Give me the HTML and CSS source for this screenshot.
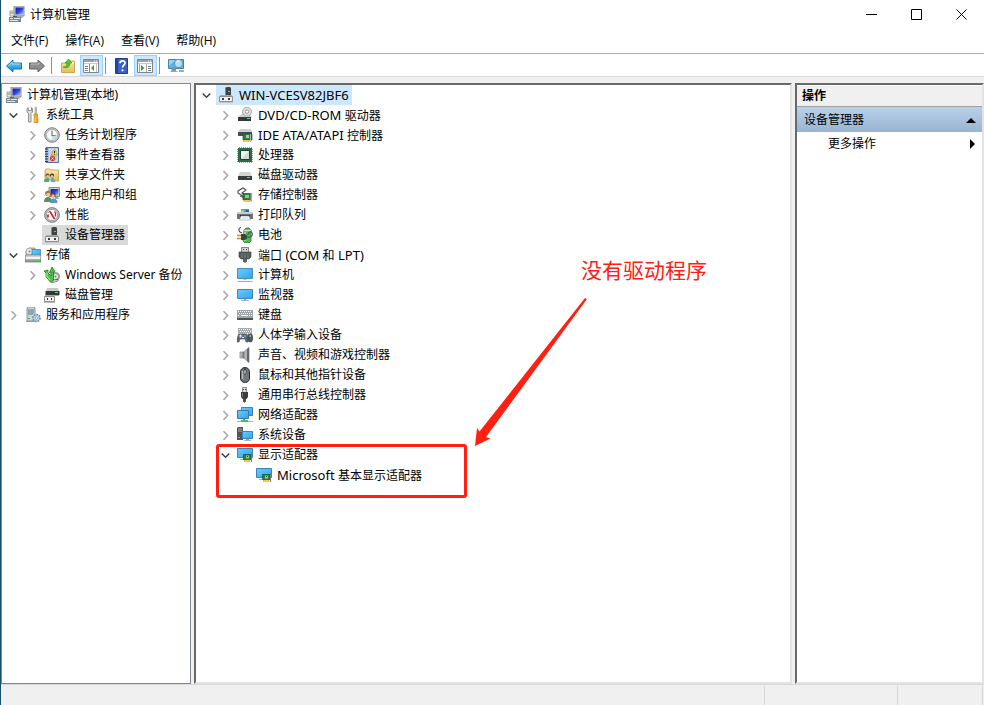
FILE: index.html
```html
<!DOCTYPE html>
<html lang="zh-CN">
<head>
  <meta charset="UTF-8">
  <meta name="viewport" content="width=device-width, initial-scale=1.0">
  <title>计算机管理</title>
  <link rel="stylesheet" href="styles.css">
</head>
<body>

  <!-- Icon sprite -->
  <svg class="sprite" aria-hidden="true">
    <defs>
      <linearGradient id="g-screen" x1="0" y1="0" x2="1" y2="1">
        <stop offset="0" stop-color="#6ccbff"/><stop offset="1" stop-color="#2fa5ee"/>
      </linearGradient>
      <linearGradient id="g-navy" x1="0" y1="0" x2="1" y2="1">
        <stop offset="0" stop-color="#0a1cb4"/><stop offset="0.5" stop-color="#2742dc"/><stop offset="1" stop-color="#b6ccff"/>
      </linearGradient>
      <linearGradient id="g-metal" x1="0" y1="0" x2="0" y2="1">
        <stop offset="0" stop-color="#e4e4e4"/><stop offset="1" stop-color="#8c8c8c"/>
      </linearGradient>
      <linearGradient id="g-back" x1="0" y1="0" x2="0" y2="1">
        <stop offset="0" stop-color="#7fd4f5"/><stop offset="1" stop-color="#0b86cf"/>
      </linearGradient>
      <linearGradient id="g-folder" x1="0" y1="0" x2="0" y2="1">
        <stop offset="0" stop-color="#fbe9a2"/><stop offset="1" stop-color="#e5bd55"/>
      </linearGradient>
    </defs>

    <symbol id="i-manage" viewBox="0 0 16 16">
      <path d="M5 0h10v10H5z" fill="#cfccc0" stroke="#8f8f8a"/>
      <path d="M6.500 1.500h8v7h-8z" fill="url(#g-navy)"/>
      <path d="M1 5h4v5H1z" fill="#ebeae2" stroke="#a0a09a"/>
      <path d="M1.500 7h3" stroke="#4a9a50"/>
      <path d="M7 10h6l1 2H6z" fill="#a9a9a4"/>
      <path d="M0 11h12v5H0z" fill="#7b8794"/>
      <path d="M1 12h3v1H1zM5 12h6v1H5zM1 14h8v1H1z" fill="#dfe5ea"/>
      <path d="M4 10h4v1H4z" fill="#4d5965"/>
    </symbol>
    <symbol id="i-tools" viewBox="0 0 16 16">
      <path d="M3 .5L2 2v3l1.500 1.500V15h2.500V6.500L7.500 5V2L6.500.5v3h-3z" fill="#dcdcdc" stroke="#777" stroke-width=".8"/>
      <path d="M10 .5h1.500v7H10z" fill="#b7bcc0" stroke="#888" stroke-width=".5"/>
      <path d="M9 7h3.500v2L12 10l1 1.500v4H9v-4L9.700 10 9 9z" fill="#f5ae22" stroke="#c07c0b" stroke-width=".7"/>
      <path d="M10 11.500v3.500" stroke="#ffe08a"/>
    </symbol>
    <symbol id="i-clock" viewBox="0 0 16 16">
      <circle cx="8" cy="8" r="7.300" fill="#c9c9c9" stroke="#7e7e7e"/>
      <circle cx="8" cy="8" r="5.600" fill="#f3f8fd" stroke="#9a9a9a" stroke-width=".6"/>
      <path d="M8 8h5A5 5 0 0 1 8 13z" fill="#c4ddf2"/>
      <path d="M8 3.500V8.500h3.500" fill="none" stroke="#a07b34" stroke-width="1.200"/>
    </symbol>
    <symbol id="i-event" viewBox="0 0 16 16">
      <path d="M2 .5h12.500v15H2z" fill="#a9bfe6" stroke="#4f6da8"/>
      <path d="M5 1.500h9v13H5z" fill="#d3dff3"/>
      <path d="M6 4h7M6 6h7M6 8h7M6 10h7M6 12h7" stroke="#8ea9d6" stroke-width=".7"/>
      <path d="M1 2h3M1 4.500h3M1 7h3M1 9.500h3M1 12h3M1 14.500h3" stroke="#2b3c66"/>
      <path d="M10.500 2l3.200 6H7.300z" fill="#fbd72b" stroke="#b59413" stroke-width=".6"/>
      <path d="M10.500 4v2M10.500 6.800v.7" stroke="#222"/>
      <circle cx="8.500" cy="11.500" r="2.700" fill="#e2392b"/>
      <path d="M7.500 10.500l2 2M9.500 10.500l-2 2" stroke="#fff" stroke-width=".9"/>
    </symbol>
    <symbol id="i-share" viewBox="0 0 16 16">
      <path d="M1 4l1-2h4l1 1h7.500v11H1z" fill="url(#g-folder)" stroke="#c79b3b" stroke-width=".8"/>
      <path d="M8 5h5" stroke="#fff6cf"/>
      <circle cx="3.500" cy="8.500" r="2" fill="#6b4a32"/><circle cx="3.700" cy="9.300" r="1.300" fill="#f0c9a0"/>
      <circle cx="8" cy="8.500" r="2" fill="#3e2b20"/><circle cx="8" cy="9.300" r="1.300" fill="#f0c9a0"/>
      <path d="M0 15c0-3 2-4 3.500-4S6 12 6 15z" fill="#47a885"/>
      <path d="M5.500 15c0-3 1.500-4 3-4s2.500 1 2.500 4z" fill="#56a9d6"/>
      <path d="M5 15l1-3 1 3z" fill="#fff"/>
    </symbol>
    <symbol id="i-users" viewBox="0 0 16 16">
      <path d="M5 .5h10.500v9H5z" fill="#d6d5cc" stroke="#8d8d8d"/>
      <path d="M6.500 2h8v6.500h-8z" fill="url(#g-navy)"/>
      <path d="M11 10h3l1 2h-4z" fill="#a4a4a0"/>
      <circle cx="4" cy="6.500" r="2.800" fill="#9b7040"/><circle cx="4.300" cy="7.600" r="1.900" fill="#f2c99c"/>
      <circle cx="9" cy="8" r="2.500" fill="#6a3c20"/><circle cx="9" cy="9" r="1.700" fill="#efbf8f"/>
      <path d="M0 15c0-3.500 1.500-5 4-5s4 1.500 4 5z" fill="#5d8f5b"/>
      <path d="M6 16c0-3 1-4.500 3.500-4.500S13.500 13 13.500 16z" fill="#5c94c4"/>
    </symbol>
    <symbol id="i-perf" viewBox="0 0 16 16">
      <circle cx="8" cy="8" r="7.400" fill="#c2c2c2" stroke="#666" stroke-width=".8"/>
      <circle cx="8" cy="8" r="5.600" fill="#fff" stroke="#777" stroke-width=".6"/>
      <path d="M4 10.500V7.500M6 4.500L10.500 12" stroke="#d8202a" stroke-width="1.700" fill="none"/>
      <path d="M10.500 4.500l1 1.500v3.500" stroke="#d8202a" stroke-width="1.300" fill="none"/>
      <path d="M4.500 5.500L6 4" stroke="#444" stroke-width=".8"/>
    </symbol>
    <symbol id="i-device" viewBox="0 0 16 16">
      <path d="M7 1l2-1h3l1 1v7H7z" fill="#3e4346"/>
      <path d="M7 1l1-.5V8H7z" fill="#83898c"/>
      <path d="M10 4h2v1h-2z" fill="#3ff04f"/>
      <path d="M2 8h12v2H2z" fill="#aaa"/>
      <path d="M1.500 9.500h13v5h-13z" fill="#f1f1f1" stroke="#8d8d8d"/>
      <path d="M4 11h2v2H4zM10 11h2v2h-2z" fill="#3b3b3b"/>
      <path d="M1 15h14v1H1z" fill="#c4c4c4"/>
    </symbol>
    <symbol id="i-storage" viewBox="0 0 16 16">
      <path d="M1 4l3-3h6v8H1z" fill="#c6cacc" stroke="#838383" stroke-width=".7"/>
      <circle cx="4.500" cy="4.500" r="3.500" fill="#e8e8e8" stroke="#8c8c8c" stroke-width=".7"/><circle cx="4.500" cy="4.500" r="1" fill="#888"/>
      <path d="M7 2.500h8.500v6H7z" fill="url(#g-screen)" stroke="#37799f" stroke-width=".7"/>
      <path d="M0 9l2-1h13l1 1v6H0z" fill="url(#g-metal)" stroke="#767676" stroke-width=".7"/>
      <path d="M1 10h14v2H1z" fill="#f5f5f5"/>
      <path d="M11 13h3v1h-3z" fill="#39e04b"/>
    </symbol>
    <symbol id="i-backup" viewBox="0 0 16 16">
      <path d="M7 5l7 1 2 3-2 5-6 2z" fill="#c3c3c3" stroke="#7d7d7d" stroke-width=".7"/>
      <circle cx="11.500" cy="9.500" r="3" fill="#eee" stroke="#777" stroke-width=".8"/><circle cx="11.500" cy="9.500" r="1" fill="#777"/>
      <path d="M11 12h3v1h-3z" fill="#d23c2c"/>
      <path d="M0 4l4-1v3l3 3V5l-1.500.5L8 0l3 4.500L9.500 5v8L7 15.500 2 10V6z" fill="#46c63f" stroke="#1b7d20" stroke-width=".8"/>
      <path d="M3 5.500v4l3 3.500" stroke="#b5f4a0" fill="none"/>
    </symbol>
    <symbol id="i-diskmgr" viewBox="0 0 16 16">
      <path d="M3 1h11l1 3H2z" fill="#c9c9c9"/>
      <path d="M1.500 4h14v4h-14z" fill="#34383b"/>
      <path d="M11 5h3v1h-3z" fill="#3cf04d"/>
      <path d="M1 8h14v1H1z" fill="#aaa"/>
      <path d="M.5 9.500h10v5H.5z" fill="#f1f1f1" stroke="#8d8d8d"/>
      <path d="M3 11h1v2H3zM7 11h1v2H7z" fill="#333"/>
      <path d="M0 15h11v1H0z" fill="#bbb"/>
    </symbol>
    <symbol id="i-service" viewBox="0 0 16 16">
      <path d="M2 1l1-1h6l1 1v13H2z" fill="#cdd6db" stroke="#74828b" stroke-width=".8"/>
      <path d="M3 3h6M3 5h6M3 7h5" stroke="#60717c"/>
      <path d="M3 11h2v1H3z" fill="#35bb45"/>
      <path d="M1 14h8v1H1z" fill="#90a0a8"/>
      <circle cx="11.500" cy="11" r="3.300" fill="#a8c8e3" stroke="#5684ab" stroke-width="2" stroke-dasharray="1.500 1"/>
      <circle cx="11.500" cy="11" r="2.800" fill="#b9d6ed"/><circle cx="11.500" cy="11" r="1.200" fill="#fff" stroke="#5684ab" stroke-width=".6"/>
    </symbol>

    <symbol id="i-dvd" viewBox="0 0 16 16">
      <path d="M3 9l3-3h6l3 4z" fill="#c7c9ca"/>
      <circle cx="10" cy="4.700" r="4.500" fill="#dedede" stroke="#8e8e8e" stroke-width=".7"/>
      <circle cx="10" cy="4.700" r="1.700" fill="#fff" stroke="#888" stroke-width=".8"/>
      <path d="M1 10l2-2h3l2 1.500h5l1 .5z" fill="#d1d1d1"/>
      <path d="M1 10h13v4H1z" fill="#34383b"/>
      <path d="M10 11h3v1h-3z" fill="#35f04a"/>
    </symbol>
    <symbol id="i-ide" viewBox="0 0 16 16">
      <path d="M1 5l2-3h11l1 3z" fill="#cfcfcf"/>
      <path d="M1 5h14v4H1z" fill="#4a4e51"/>
      <path d="M6 7h9v6H6z" fill="#2c7d52" stroke="#16553a" stroke-width=".7"/>
      <path d="M9 8h3v3H9z" fill="#9fd38f"/>
      <path d="M13 7h1v8h-1z" fill="#b3b3b3"/>
      <path d="M6 13h6v2H6z" fill="#f2b51d"/>
      <path d="M8 13v2M10 13v2" stroke="#fff3c0" stroke-width=".6"/>
    </symbol>
    <symbol id="i-cpu" viewBox="0 0 16 16">
      <path d="M.5 2v13M15.500 2v13M2 .5h13M2 15.500h13" stroke="#b79b3a" stroke-dasharray="1 1"/>
      <path d="M1 1h14v14H1z" fill="#2d6b4b"/>
      <path d="M3.500 3.500h9v9h-9z" fill="#d3d9d6" stroke="#144a33"/>
      <path d="M4 4h8L4 12z" fill="#f2f4f3"/>
    </symbol>
    <symbol id="i-disk" viewBox="0 0 16 16">
      <path d="M1 9l2-4h10l2 4z" fill="#d3d4d4"/>
      <path d="M1 9h14v4H1z" fill="#393e41"/>
      <path d="M10 10h3v1h-3z" fill="#38f04d"/>
    </symbol>
    <symbol id="i-controller" viewBox="0 0 16 16">
      <path d="M1 4l5-3 3 2-4 3 4 3-2 1-6-4z" fill="#fff" stroke="#4b4b4b" stroke-width="1.100"/>
      <path d="M3 9l4 2" stroke="#4b4b4b"/>
      <path d="M6 6.500h8V13H6z" fill="#2c7d52" stroke="#16553a" stroke-width=".7"/>
      <path d="M8 8h4v3H8z" fill="#8fca84"/>
      <path d="M13.500 6h1.500v8.500h-1.500z" fill="#a5a5a5"/>
      <path d="M7 13h6v2H7z" fill="#f2b51d"/>
      <path d="M9 13v2M11 13v2" stroke="#fff3c0" stroke-width=".6"/>
    </symbol>
    <symbol id="i-printer" viewBox="0 0 16 16">
      <path d="M4 2h8v3H4z" fill="#27a8ec"/><path d="M4 3h3v2H4z" fill="#8adf57"/><path d="M9 3h3v2H9z" fill="#245fc6"/>
      <path d="M1 5h14l1 2v5H0V7z" fill="#6d7275"/>
      <path d="M1 5h14l1 2H0z" fill="#c9cccd"/>
      <path d="M3 8h10v2H3z" fill="#2d3133"/>
      <path d="M4 9h8l1.500 4h-11z" fill="#fff" stroke="#999" stroke-width=".6"/>
      <path d="M5 11h6" stroke="#a9dcf5"/>
    </symbol>
    <symbol id="i-battery" viewBox="0 0 16 16">
      <path d="M7 3l2-2h3l2 2v11l-2 2H8l-2-2z" fill="#45bd4d" stroke="#2d5e30" stroke-width=".7"/>
      <path d="M7 2.500h7v2H7z" fill="#e3e9e3" stroke="#777" stroke-width=".5"/>
      <path d="M8 5v9" stroke="#b7f4a0" stroke-width="1.300"/>
      <path d="M9 9.500c5 2 7-1 6-3.500S11 5 11 8M5 6C1 5 1 1 4 .5" fill="none" stroke="#4a4f52" stroke-width="1.100"/>
      <path d="M4 7h4l2 1.500v3L8 13H4z" fill="#3c4144"/>
      <path d="M0 8.500h4M0 11.500h4" stroke="#c08f28" stroke-width="1.300"/>
    </symbol>
    <symbol id="i-port" viewBox="0 0 16 16">
      <path d="M4.500.5h7v5h-7z" fill="#d2d2d2" stroke="#707070" stroke-width=".8"/>
      <path d="M6 2h1v1H6zM9 2h1v1H9z" fill="#444"/>
      <path d="M2 5h12v5l-2 2H4l-2-2z" fill="#55595b" stroke="#3d4042" stroke-width=".6"/>
      <path d="M5 6v5M8 6v5M11 6v5" stroke="#85898b" stroke-width=".7"/>
      <path d="M6 12h4v3H6z" fill="#606466"/><path d="M7 15h2v1H7z" fill="#999"/>
    </symbol>
    <symbol id="i-computer" viewBox="0 0 16 16">
      <path d="M.5 1.500h15v10H.5z" fill="url(#g-screen)" stroke="#4a8eb8"/>
      <path d="M6 12h4v1H6z" fill="#b8cad4"/>
      <path d="M1 14h14l1 1H0z" fill="#9eb0ba"/>
    </symbol>
    <symbol id="i-monitor" viewBox="0 0 16 16">
      <path d="M.5 2.500h15v9H.5z" fill="url(#g-screen)" stroke="#4386b2"/>
      <path d="M7 12h2v1H7z" fill="#8ba1ae"/><path d="M4 13h8v1H4z" fill="#9fb2bd"/>
    </symbol>
    <symbol id="i-keyboard" viewBox="0 0 16 16">
      <path d="M0 3h16v8H0z" fill="#9da5ab"/>
      <path d="M0 11h16v2H0z" fill="#4c5357"/>
      <path d="M1 4.500h14M2 6.500h13M1 8.500h2M12 8.500h3" stroke="#fff" stroke-dasharray="1 1"/>
      <path d="M4 8.500h7" stroke="#fff"/>
    </symbol>
    <symbol id="i-hid" viewBox="0 0 16 16">
      <path d="M1 1h14v8H1z" fill="#a5adb2"/>
      <path d="M2 2.500h12M3 4.500h11M2 6.500h12" stroke="#fff" stroke-dasharray="1 1"/>
      <path d="M2 7h7l2 3v5H9l-1-3H3l-1 3H0v-4z" fill="#676c70" stroke="#43484b" stroke-width=".6"/>
      <path d="M2 9h3M3.500 7.500v3" stroke="#eee"/><path d="M7 8h2v2H7z" fill="#42a7ef"/><path d="M5 10h2v1H5z" fill="#fff"/>
      <rect x="11" y="7" width="4.500" height="8" rx="2.200" fill="#515659" stroke="#303436" stroke-width=".6"/>
      <path d="M13.200 8v2" stroke="#ddd"/>
    </symbol>
    <symbol id="i-sound" viewBox="0 0 16 16">
      <path d="M3 5h4v6H3z" fill="#8f9599" stroke="#5a5f62" stroke-width=".6"/>
      <path d="M4 5v6" stroke="#cfd3d5"/>
      <path d="M7 5l5-4.500v15L7 11z" fill="#b1b6b9" stroke="#666" stroke-width=".6"/>
      <path d="M10 2l2-1.500v15L10 14z" fill="#61676b"/>
    </symbol>
    <symbol id="i-mouse" viewBox="0 0 16 16">
      <rect x="3.500" y=".5" width="9" height="15" rx="4.300" fill="#70777b" stroke="#26292b"/>
      <path d="M5.500 4v8" stroke="#b3b9bd" stroke-width="1.500"/>
      <path d="M8 1v6" stroke="#202325"/><path d="M7 3h2v4H7z" fill="#c7d5df" stroke="#202325" stroke-width=".5"/>
    </symbol>
    <symbol id="i-usb" viewBox="0 0 16 16">
      <path d="M5.500.5h4v5h-4z" fill="#dcdcdc" stroke="#777" stroke-width=".8"/>
      <path d="M6 2h1v1H6zM8 2h1v1H8z" fill="#444"/>
      <path d="M4 5h7v5l-1.500 2h-4L4 10z" fill="#3c4042"/>
      <path d="M6 12h3v3H6z" fill="#4f5355"/><path d="M7 15h1v1H7z" fill="#888"/><path d="M5.500 6v4" stroke="#73787b"/>
    </symbol>
    <symbol id="i-network" viewBox="0 0 16 16">
      <path d="M4.500.5h11v8h-11z" fill="url(#g-screen)" stroke="#3f83b0"/>
      <path d="M.5 3.500h11v8H.5z" fill="url(#g-screen)" stroke="#3679a6"/>
      <path d="M6 12h2v2H6z" fill="#3dae4c"/><path d="M4 13h7v2H4z" fill="#43c156"/><path d="M0 14h4v1H0zM11 14h5v1h-5z" fill="#a3b2b8"/>
    </symbol>
    <symbol id="i-system" viewBox="0 0 16 16">
      <path d="M0 1l1-1h5v13H0z" fill="#4f5558"/>
      <path d="M1 2h4M1 4h4" stroke="#a5abae"/><path d="M1 10h2v1H1z" fill="#3be84e"/>
      <path d="M5.500 4.500h10v7h-10z" fill="url(#g-screen)" stroke="#3f83b0"/>
      <path d="M9 12h3v1H9z" fill="#8ba1ae"/><path d="M7 13h7v1H7z" fill="#a9b8c0"/>
    </symbol>
    <symbol id="i-display" viewBox="0 0 16 16">
      <path d="M.5 1.500h15v9H.5z" fill="url(#g-screen)" stroke="#3f83b0"/>
      <path d="M3 12h4v1H3z" fill="#a4b5bf"/>
      <path d="M6.500 7.500H14v5H6.500z" fill="#2c7d52" stroke="#16553a" stroke-width=".8"/>
      <path d="M9 8.500h3v3H9z" fill="#8ecb88"/><path d="M10 9h1v1h-1z" fill="#1d4c39"/>
      <path d="M14 6h1v9h-1z" fill="#767b7e"/>
      <path d="M7 13h6v2H7z" fill="#f2b51d"/><path d="M9 13v2M11 13v2" stroke="#fff3c0" stroke-width=".6"/>
    </symbol>

    <symbol id="i-back" viewBox="0 0 16 16">
      <path d="M.5 8L7 2v3h8.500v6H7v3z" fill="url(#g-back)" stroke="#1b75a8" stroke-linejoin="round"/>
      <path d="M2.500 8L6 4.500V6h8" fill="none" stroke="#b5ecff" stroke-width=".8"/>
    </symbol>
    <symbol id="i-forward" viewBox="0 0 16 16">
      <path d="M15.500 8L9 2v3H.5v6H9v3z" fill="#8e8e8e" stroke="#5f5f5f" stroke-linejoin="round"/>
      <path d="M2 6h8V4.500" fill="none" stroke="#cacaca" stroke-width=".8"/>
    </symbol>
    <symbol id="i-up" viewBox="0 0 16 16">
      <path d="M1.500 5H8l1-2h5.500v11.500h-13z" fill="url(#g-folder)" stroke="#bd9845" stroke-width=".8"/>
      <path d="M10 5h4" stroke="#fff"/>
      <path d="M3 9c3 0 4-1.500 4-4H5l3.500-4L12 5h-2c0 4-3 6-7 4z" fill="#50c92c" stroke="#2c8e17" stroke-width=".6"/>
    </symbol>
    <symbol id="i-tree" viewBox="0 0 16 16">
      <path d="M.5 1.500h15v13H.5z" fill="#fff" stroke="#7e858b"/>
      <path d="M1 2h14v2H1z" fill="#9ba1a6"/><path d="M11 3h1M13 3h1" stroke="#fff"/>
      <path d="M1 5.500h14" stroke="#c3c8cb"/><path d="M6.500 6v8" stroke="#848b90"/>
      <path d="M2 8.500h3M2 10.500h3M2 12.500h3" stroke="#767d83"/>
      <path d="M11 7v6L8 10z" fill="#35a52d"/><path d="M13.500 6v8" stroke="#bac0c4"/>
    </symbol>
    <symbol id="i-actions" viewBox="0 0 16 16">
      <path d="M.5 1.500h15v13H.5z" fill="#fff" stroke="#7e858b"/>
      <path d="M1 2h14v2H1z" fill="#9ba1a6"/><path d="M11 3h1M13 3h1" stroke="#fff"/>
      <path d="M1 5.500h14" stroke="#c3c8cb"/><path d="M9.500 6v8M2.500 6v8" stroke="#a4aaae"/>
      <path d="M11 8.500h3M11 10.500h3M11 12.500h3" stroke="#767d83"/>
      <path d="M4 7v6l3.500-3z" fill="#35a52d"/>
    </symbol>
    <symbol id="i-help" viewBox="0 0 16 16">
      <path d="M1.500.5h12v15h-12z" fill="#3c63c4" stroke="#223f8e"/>
      <path d="M2 1h2v14H2z" fill="#25449d"/>
      <path d="M6 5.300C6 2 11.200 2.200 11 5c0 2-2.500 2.200-2.500 4.500" fill="none" stroke="#fff" stroke-width="1.700"/>
      <circle cx="8.500" cy="12.300" r="1.100" fill="#fff"/>
    </symbol>
    <symbol id="i-scan" viewBox="0 0 16 16">
      <path d="M.5 1.500h15v9H.5z" fill="#57b4e8" stroke="#4283a8"/>
      <path d="M1 2h6L1 8z" fill="#92d5f7"/>
      <path d="M3 13h6l1 1H2z" fill="#a2adb3"/><path d="M5 11h3v2H5z" fill="#7c98a8"/>
      <path d="M7.500 9.500L3.500 13" stroke="#898f94" stroke-width="1.700"/>
      <circle cx="10.500" cy="5.500" r="4" fill="#ace1fb" stroke="#7693a5" stroke-width="1.100"/>
      <path d="M8.500 4.500a2.500 2.500 0 0 1 3-1.500" fill="none" stroke="#fff"/>
      <path d="M11 12h5v2h-5z" fill="#a2adb3"/>
    </symbol>

    <symbol id="i-open" viewBox="0 0 9 9"><path d="M.7 2.500l3.800 3.800 3.800-3.800" fill="none" stroke="#404040" stroke-width="1.500"/></symbol>
    <symbol id="i-closed" viewBox="0 0 9 9"><path d="M2.500.2L6.700 4.500 2.500 8.800" fill="none" stroke="#a6a6a6" stroke-width="1.500"/></symbol>
  </svg>

  <!-- Title bar -->
  <header class="title-bar">
    <svg class="icon"><use href="#i-manage"/></svg>
    <h1>计算机管理</h1>
    <div class="window-buttons">
      <button type="button" aria-label="最小化"><svg viewBox="0 0 11 11"><path d="M0 5.500h11"/></svg></button>
      <button type="button" aria-label="最大化"><svg viewBox="0 0 11 11"><path d="M.5.500h10v10H.5z"/></svg></button>
      <button type="button" aria-label="关闭"><svg viewBox="0 0 11 11"><path d="M.5.500l10 10M10.500.500l-10 10"/></svg></button>
    </div>
  </header>

  <!-- Menu -->
  <nav class="menu-bar">
    <button type="button">文件(F)</button>
    <button type="button">操作(A)</button>
    <button type="button">查看(V)</button>
    <button type="button">帮助(H)</button>
  </nav>

  <!-- Toolbar -->
  <div class="tool-bar" role="toolbar">
    <button type="button" aria-label="后退"><svg class="icon"><use href="#i-back"/></svg></button>
    <button type="button" aria-label="前进"><svg class="icon"><use href="#i-forward"/></svg></button>
    <span class="separator"></span>
    <button type="button" aria-label="向上"><svg class="icon"><use href="#i-up"/></svg></button>
    <button type="button" class="active" aria-label="显示控制台树"><svg class="icon"><use href="#i-tree"/></svg></button>
    <span class="separator"></span>
    <button type="button" aria-label="帮助"><svg class="icon"><use href="#i-help"/></svg></button>
    <button type="button" class="active" aria-label="显示操作窗格"><svg class="icon"><use href="#i-actions"/></svg></button>
    <span class="separator"></span>
    <button type="button" aria-label="扫描检测硬件改动"><svg class="icon"><use href="#i-scan"/></svg></button>
  </div>

  <main class="panes">
    <!-- Console tree -->
    <nav class="console-pane">
      <ul class="tree">
        <li><a class="node" href="#"><svg class="icon"><use href="#i-manage"/></svg>计算机管理(本地)</a></li>
        <li>
          <button type="button" class="toggle" aria-label="折叠"><svg><use href="#i-open"/></svg></button><a class="node" href="#"><svg class="icon"><use href="#i-tools"/></svg>系统工具</a>
          <ul>
            <li><button type="button" class="toggle" aria-label="展开"><svg><use href="#i-closed"/></svg></button><a class="node" href="#"><svg class="icon"><use href="#i-clock"/></svg>任务计划程序</a></li>
            <li><button type="button" class="toggle" aria-label="展开"><svg><use href="#i-closed"/></svg></button><a class="node" href="#"><svg class="icon"><use href="#i-event"/></svg>事件查看器</a></li>
            <li><button type="button" class="toggle" aria-label="展开"><svg><use href="#i-closed"/></svg></button><a class="node" href="#"><svg class="icon"><use href="#i-share"/></svg>共享文件夹</a></li>
            <li><button type="button" class="toggle" aria-label="展开"><svg><use href="#i-closed"/></svg></button><a class="node" href="#"><svg class="icon"><use href="#i-users"/></svg>本地用户和组</a></li>
            <li><button type="button" class="toggle" aria-label="展开"><svg><use href="#i-closed"/></svg></button><a class="node" href="#"><svg class="icon"><use href="#i-perf"/></svg>性能</a></li>
            <li class="leaf"><a class="node current" href="#"><svg class="icon"><use href="#i-device"/></svg>设备管理器</a></li>
          </ul>
        </li>
        <li>
          <button type="button" class="toggle" aria-label="折叠"><svg><use href="#i-open"/></svg></button><a class="node" href="#"><svg class="icon"><use href="#i-storage"/></svg>存储</a>
          <ul>
            <li><button type="button" class="toggle" aria-label="展开"><svg><use href="#i-closed"/></svg></button><a class="node" href="#"><svg class="icon"><use href="#i-backup"/></svg>Windows Server 备份</a></li>
            <li class="leaf"><a class="node" href="#"><svg class="icon"><use href="#i-diskmgr"/></svg>磁盘管理</a></li>
          </ul>
        </li>
        <li><button type="button" class="toggle" aria-label="展开"><svg><use href="#i-closed"/></svg></button><a class="node" href="#"><svg class="icon"><use href="#i-service"/></svg>服务和应用程序</a></li>
      </ul>
    </nav>

    <!-- Devices -->
    <section class="device-pane">
      <ul class="tree">
        <li>
          <button type="button" class="toggle" aria-label="折叠"><svg><use href="#i-open"/></svg></button><a class="node selected" href="#"><svg class="icon"><use href="#i-device"/></svg><span class="latin">WIN-VCESV82JBF6</span></a>
          <ul>
            <li><button type="button" class="toggle" aria-label="展开"><svg><use href="#i-closed"/></svg></button><a class="node" href="#"><svg class="icon"><use href="#i-dvd"/></svg><span><span class="latin">DVD/CD-ROM </span>驱动器</span></a></li>
            <li><button type="button" class="toggle" aria-label="展开"><svg><use href="#i-closed"/></svg></button><a class="node" href="#"><svg class="icon"><use href="#i-ide"/></svg><span><span class="latin">IDE ATA/ATAPI </span>控制器</span></a></li>
            <li><button type="button" class="toggle" aria-label="展开"><svg><use href="#i-closed"/></svg></button><a class="node" href="#"><svg class="icon"><use href="#i-cpu"/></svg>处理器</a></li>
            <li><button type="button" class="toggle" aria-label="展开"><svg><use href="#i-closed"/></svg></button><a class="node" href="#"><svg class="icon"><use href="#i-disk"/></svg>磁盘驱动器</a></li>
            <li><button type="button" class="toggle" aria-label="展开"><svg><use href="#i-closed"/></svg></button><a class="node" href="#"><svg class="icon"><use href="#i-controller"/></svg>存储控制器</a></li>
            <li><button type="button" class="toggle" aria-label="展开"><svg><use href="#i-closed"/></svg></button><a class="node" href="#"><svg class="icon"><use href="#i-printer"/></svg>打印队列</a></li>
            <li><button type="button" class="toggle" aria-label="展开"><svg><use href="#i-closed"/></svg></button><a class="node" href="#"><svg class="icon"><use href="#i-battery"/></svg>电池</a></li>
            <li><button type="button" class="toggle" aria-label="展开"><svg><use href="#i-closed"/></svg></button><a class="node" href="#"><svg class="icon"><use href="#i-port"/></svg><span>端口<span class="latin"> (COM </span>和<span class="latin"> LPT)</span></span></a></li>
            <li><button type="button" class="toggle" aria-label="展开"><svg><use href="#i-closed"/></svg></button><a class="node" href="#"><svg class="icon"><use href="#i-computer"/></svg>计算机</a></li>
            <li><button type="button" class="toggle" aria-label="展开"><svg><use href="#i-closed"/></svg></button><a class="node" href="#"><svg class="icon"><use href="#i-monitor"/></svg>监视器</a></li>
            <li><button type="button" class="toggle" aria-label="展开"><svg><use href="#i-closed"/></svg></button><a class="node" href="#"><svg class="icon"><use href="#i-keyboard"/></svg>键盘</a></li>
            <li><button type="button" class="toggle" aria-label="展开"><svg><use href="#i-closed"/></svg></button><a class="node" href="#"><svg class="icon"><use href="#i-hid"/></svg>人体学输入设备</a></li>
            <li><button type="button" class="toggle" aria-label="展开"><svg><use href="#i-closed"/></svg></button><a class="node" href="#"><svg class="icon"><use href="#i-sound"/></svg>声音、视频和游戏控制器</a></li>
            <li><button type="button" class="toggle" aria-label="展开"><svg><use href="#i-closed"/></svg></button><a class="node" href="#"><svg class="icon"><use href="#i-mouse"/></svg>鼠标和其他指针设备</a></li>
            <li><button type="button" class="toggle" aria-label="展开"><svg><use href="#i-closed"/></svg></button><a class="node" href="#"><svg class="icon"><use href="#i-usb"/></svg>通用串行总线控制器</a></li>
            <li><button type="button" class="toggle" aria-label="展开"><svg><use href="#i-closed"/></svg></button><a class="node" href="#"><svg class="icon"><use href="#i-network"/></svg>网络适配器</a></li>
            <li><button type="button" class="toggle" aria-label="展开"><svg><use href="#i-closed"/></svg></button><a class="node" href="#"><svg class="icon"><use href="#i-system"/></svg>系统设备</a></li>
            <li>
              <button type="button" class="toggle" aria-label="折叠"><svg><use href="#i-open"/></svg></button><a class="node" href="#"><svg class="icon"><use href="#i-display"/></svg>显示适配器</a>
              <ul>
                <li class="leaf"><a class="node" href="#"><svg class="icon"><use href="#i-display"/></svg><span><span class="latin">Microsoft </span>基本显示适配器</span></a></li>
              </ul>
            </li>
          </ul>
        </li>
      </ul>

      <!-- Red callout over the tree -->
      <div class="callout-box"></div>
      <svg class="callout-arrow" viewBox="0 0 114 150"><path d="M1 149l2-18 2.500 3.500L111 1l2 1L12 140l4.500 1.500z"/></svg>
      <p class="callout-text">没有驱动程序</p>
    </section>

    <!-- Actions -->
    <aside class="action-pane">
      <h2>操作</h2>
      <button type="button" class="group">设备管理器<svg viewBox="0 0 10 10"><path d="M0 8l5-5 5 5z"/></svg></button>
      <button type="button" class="action">更多操作<svg viewBox="0 0 10 10"><path d="M4 0l5 5-5 5z"/></svg></button>
    </aside>
  </main>

  <!-- Status bar -->
  <footer class="status-bar">
    <span class="main"></span>
    <span class="middle"></span>
    <span class="last"></span>
  </footer>

</body>
</html>
```

FILE: styles.css
```css
* {
  box-sizing: border-box;
}

body {
  display: flex;
  flex-direction: column;
  height: 100vh;
  margin: 0;
  border-left: 1px solid #17506f;
  background: #f0f0f0;
  color: #000;
  font-family: "Noto Sans", "Noto Sans CJK SC", sans-serif;
  font-size: 12px;
  line-height: 20px;
  overflow: hidden;
}

button {
  padding: 0;
  border: 0;
  background: none;
  color: inherit;
  font: inherit;
}

ul {
  margin: 0;
  padding: 0;
  list-style: none;
}

.sprite {
  position: absolute;
  width: 0;
  height: 0;
}

.icon {
  flex: none;
  width: 16px;
  height: 16px;
}

/* Title bar */
.title-bar {
  display: flex;
  align-items: flex-start;
  flex: none;
  gap: 5px;
  height: 30px;
  padding-left: 8px;
  background: #fff;
}

.title-bar .icon {
  margin-top: 6px;
}

.title-bar h1 {
  flex: 1;
  margin: 5px 0 0;
  font-size: 12px;
  font-weight: normal;
}

.window-buttons {
  display: flex;
}

.window-buttons button {
  display: flex;
  align-items: center;
  justify-content: center;
  width: 45px;
  height: 29px;
}

.window-buttons svg {
  width: 11px;
  height: 11px;
  fill: none;
  stroke: #000;
}

/* Menu */
.menu-bar {
  display: flex;
  flex: none;
  height: 24px;
  padding: 1px 2px 0;
  border-bottom: 1px solid #a9abb5;
  background: #fff;
  font-family: "Open Sans", "Noto Sans CJK SC", sans-serif;
}

.menu-bar button {
  height: 20px;
  padding: 0 9px 0 8px;
}

/* Toolbar */
.tool-bar {
  display: flex;
  flex: none;
  height: 23px;
  padding: 1px 0 0 2px;
  border-bottom: 1px solid #dadada;
  background: #fff;
}

.tool-bar button {
  display: flex;
  align-items: flex-start;
  width: 23px;
  padding: 2px 0 0 2px;
  border: 1px solid transparent;
}

.tool-bar .active {
  border-color: #99d1ff;
  background: #cce8ff;
}

.separator {
  width: 1px;
  margin: 2px 5px 2px 2px;
  background: #8d8d8d;
}

/* Panes */
.panes {
  display: grid;
  grid-template-columns: 190px 1fr 189px;
  flex: 1;
  gap: 3px;
  min-height: 0;
  padding-top: 6px;
}

.console-pane {
  padding: 1px 2px;
  border: 1px solid #828790;
  background: #fff;
  overflow: hidden;
}

.device-pane,
.action-pane {
  border: 2px solid;
  border-color: #696969 #e3e3e3 #e3e3e3 #696969;
  background: #fff;
}

.device-pane {
  position: relative;
  padding-left: 1px;
}

/* Tree */
.tree li {
  white-space: nowrap;
}

.tree ul {
  padding-left: 19px;
}

.tree .leaf {
  padding-left: 19px;
}

.toggle {
  display: inline-flex;
  align-items: center;
  justify-content: center;
  width: 19px;
  height: 20px;
  vertical-align: top;
}

.toggle svg {
  width: 9px;
  height: 9px;
}

.node {
  display: inline-flex;
  align-items: center;
  gap: 5px;
  height: 20px;
  padding: 0 3px 0 2px;
  color: inherit;
  text-decoration: none;
  vertical-align: top;
}

.latin {
  font-size: 13px;
  white-space: pre;
}

.current {
  background: #d9d9d9;
}

.selected {
  background: #cce8ff;
}

/* Callout */
.callout-box {
  position: absolute;
  top: 359px;
  left: 20px;
  width: 251px;
  height: 54px;
  border: 3px solid #ff2012;
  border-radius: 3px;
}

.callout-arrow {
  position: absolute;
  top: 212px;
  left: 278px;
  width: 114px;
  height: 150px;
  fill: #ff2012;
}

.callout-text {
  position: absolute;
  top: 173px;
  left: 385px;
  margin: 0;
  color: #ff2012;
  font-size: 21px;
  line-height: 24px;
  white-space: nowrap;
}

/* Actions */
.action-pane {
  display: flex;
  flex-direction: column;
}

.action-pane h2 {
  margin: 1px 0 0;
  padding-left: 5px;
  border-bottom: 1px solid #a0a0a0;
  background: #f0f0f0;
  font-size: 12px;
  font-weight: bold;
}

.action-pane button {
  display: flex;
  align-items: center;
  justify-content: space-between;
  height: 25px;
  padding-right: 6px;
}

.action-pane .group {
  padding-left: 7px;
  background: linear-gradient(#b9d1ea, #99b4d1);
}

.action-pane .action {
  height: 23px;
  padding-left: 31px;
}

.action-pane svg {
  width: 10px;
  height: 10px;
}

/* Status bar */
.status-bar {
  display: flex;
  flex: none;
  height: 21px;
  padding: 1px 1px 0 0;
  border-top: 1px solid #d7d7d7;
}

.status-bar span {
  border-right: 1px solid #d7d7d7;
}

.status-bar .main {
  flex: 1;
}

.status-bar .middle {
  width: 133px;
}

.status-bar .last {
  width: 85px;
}
```
